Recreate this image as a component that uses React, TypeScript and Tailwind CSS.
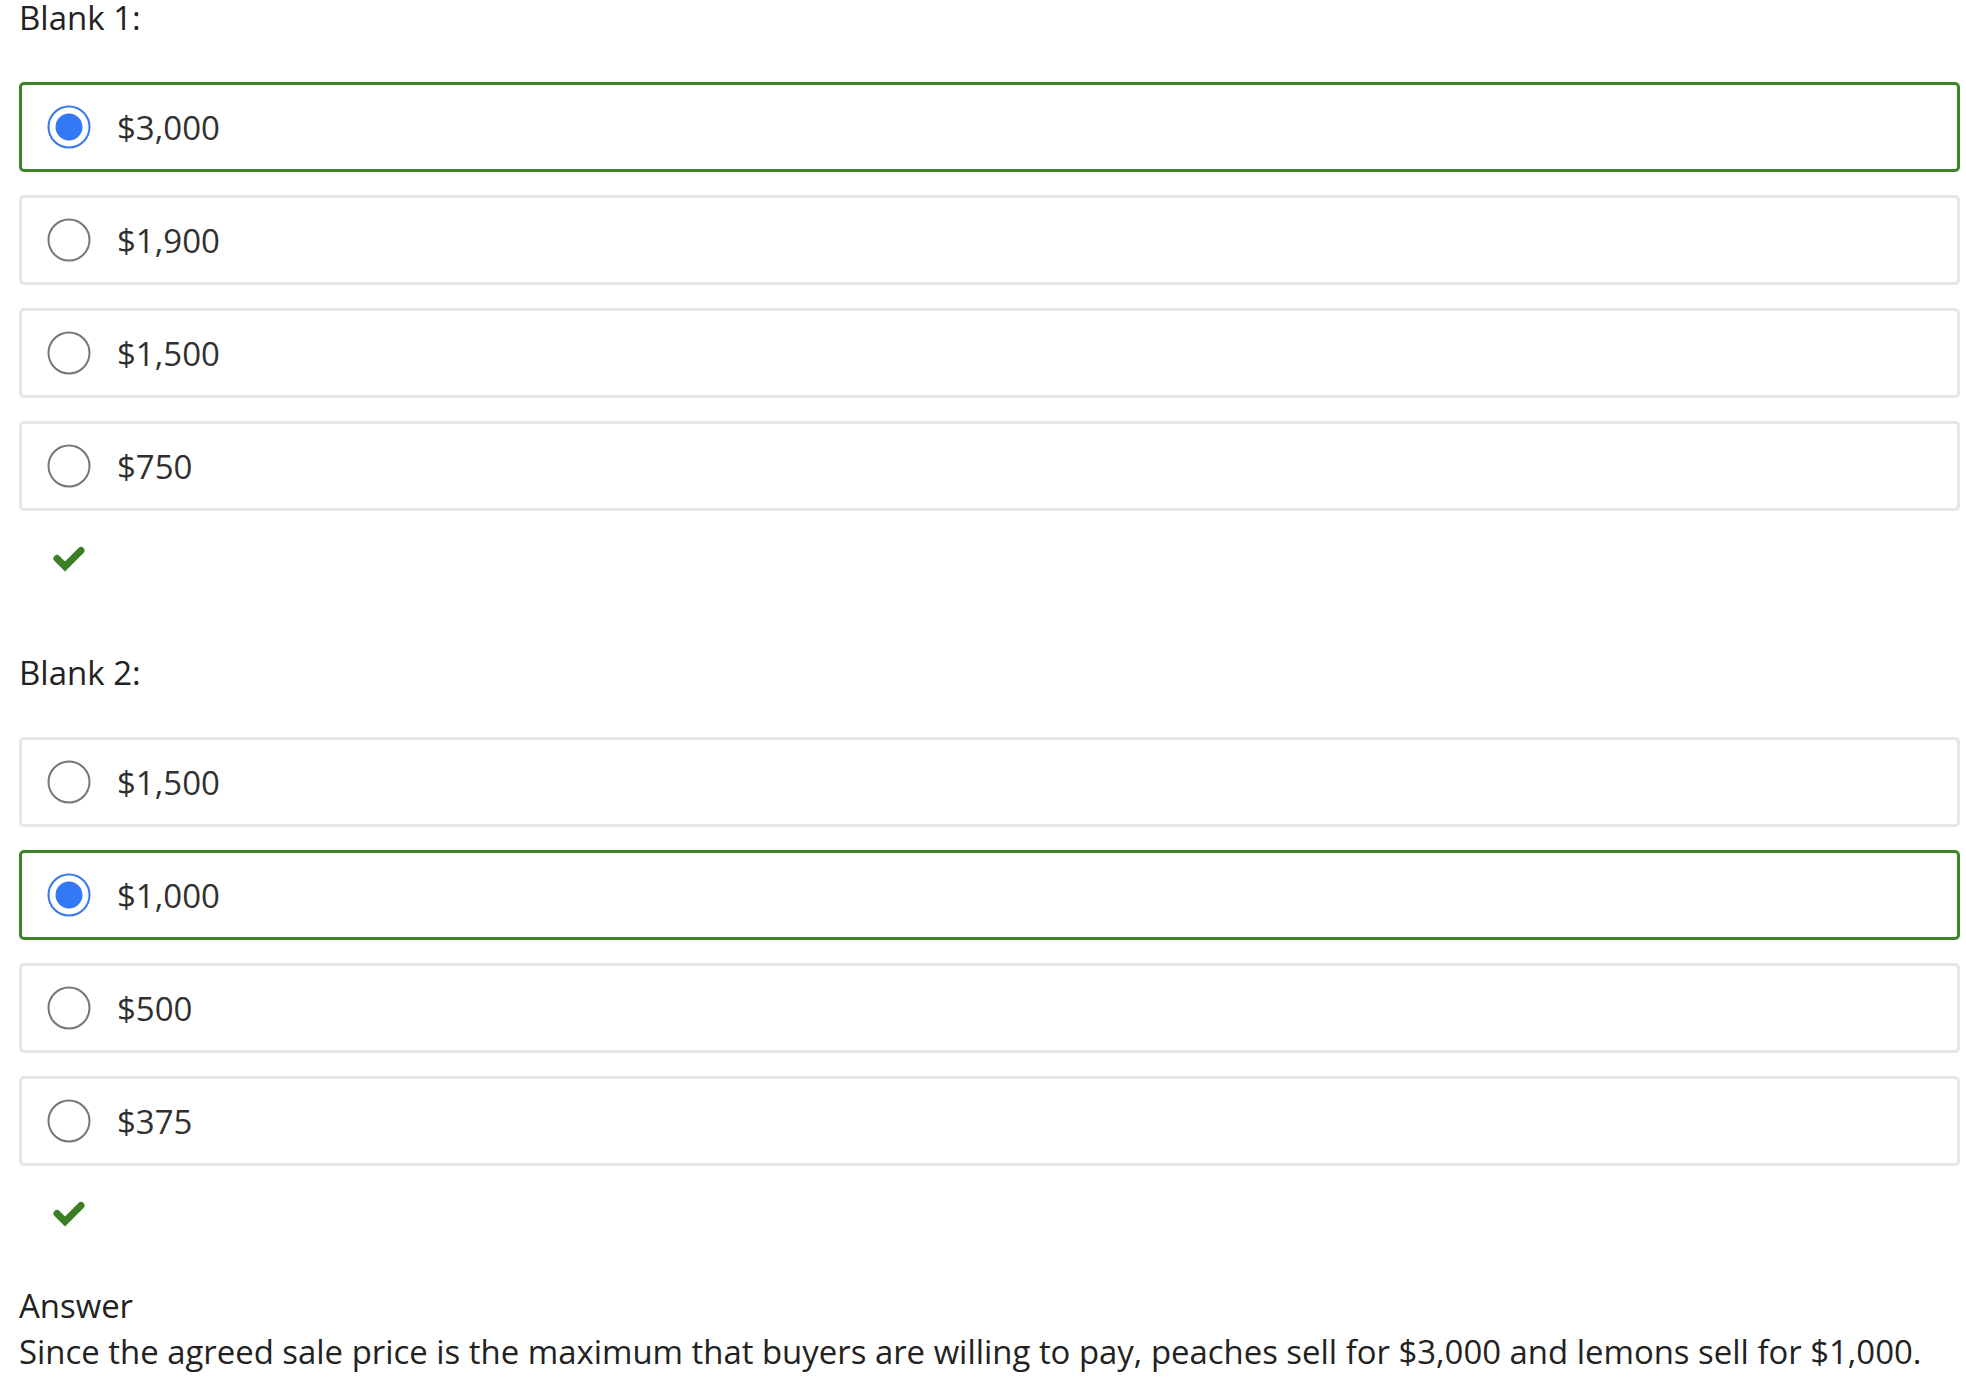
type Choice = { label: string; selected?: boolean };

const blanks: { title: string; choices: Choice[] }[] = [
  {
    title: "Blank 1:",
    choices: [
      { label: "$3,000", selected: true },
      { label: "$1,900" },
      { label: "$1,500" },
      { label: "$750" },
    ],
  },
  {
    title: "Blank 2:",
    choices: [
      { label: "$1,500" },
      { label: "$1,000", selected: true },
      { label: "$500" },
      { label: "$375" },
    ],
  },
];

function Radio({ checked }: { checked?: boolean }) {
  return (
    <svg width="44" height="44" viewBox="0 0 44 44" className="shrink-0">
      <circle
        cx="22"
        cy="22"
        r="20.5"
        fill="white"
        stroke={checked ? "#3578f6" : "#767676"}
        strokeWidth="2"
      />
      {checked && <circle cx="22" cy="22" r="13.5" fill="#3578f6" />}
    </svg>
  );
}

function CheckMark() {
  return (
    <svg width="38" height="30" viewBox="0 0 38 30" className="mt-[34px] ml-[31px] block">
      <polyline
        points="7,13.5 15,21.5 31,5.5"
        fill="none"
        stroke="#3a7f24"
        strokeWidth="7"
        strokeLinecap="round"
        strokeLinejoin="miter"
      />
    </svg>
  );
}

function Option({ choice }: { choice: Choice }) {
  return (
    <div
      className={`flex h-[90px] items-center rounded-[5px] border-[3px] bg-white pl-[25px] ${
        choice.selected ? "border-[#3b8526]" : "border-[#e6e6e6]"
      }`}
    >
      <Radio checked={choice.selected} />
      <span className="ml-[26px] text-[33px] leading-none text-[#303030]">
        {choice.label}
      </span>
    </div>
  );
}

export default function App() {
  return (
    <div
      className="min-h-screen bg-white pl-[19px] pr-[6px] text-[#222]"
      style={{ fontFamily: '"Open Sans", "Noto Sans", sans-serif' }}
    >
      {blanks.map((blank, i) => (
        <section key={blank.title} className={i > 0 ? "mt-[80px]" : ""}>
          <h3 className="text-[33px] font-normal leading-[36px]">{blank.title}</h3>
          <div className="mt-[46px] flex flex-col gap-[23px]">
            {blank.choices.map((c) => (
              <Option key={c.label} choice={c} />
            ))}
          </div>
          <CheckMark />
        </section>
      ))}
      <div className="mt-[53px] text-[32.9px] leading-[46px]">
        <div>Answer</div>
        <p>
          Since the agreed sale price is the maximum that buyers are willing to
          pay, peaches sell for $3,000 and lemons sell for $1,000.
        </p>
      </div>
    </div>
  );
}
